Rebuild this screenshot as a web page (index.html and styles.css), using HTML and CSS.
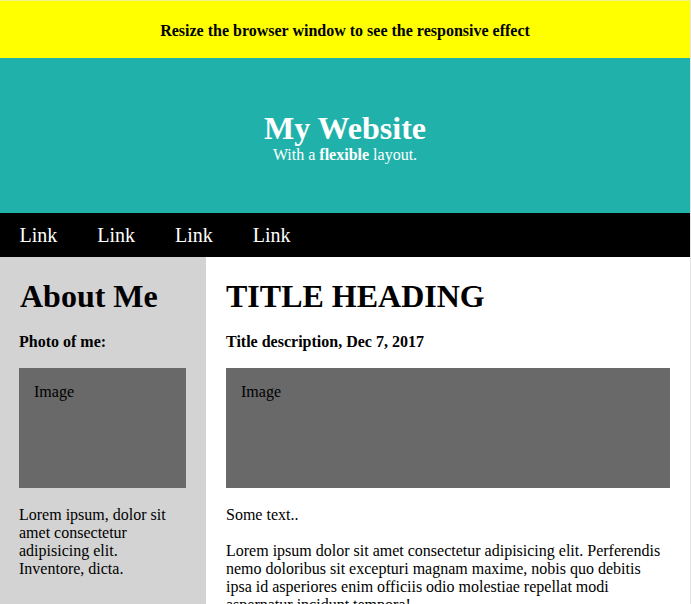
FILE: index.html
```html
<!DOCTYPE html>
<html lang="en">
<head>
<meta charset="utf-8">
<title>My Website</title>
<link rel="stylesheet" href="styles.css">
</head>
<body>
<div class="page">
  <div class="notice">
    <h4>Resize the browser window to see the responsive effect</h4>
  </div>
  <header class="header">
    <h1>My Website</h1>
    <p>With a <b>flexible</b> layout.</p>
  </header>
  <nav class="navbar">
    <a href="#">Link</a>
    <a href="#">Link</a>
    <a href="#">Link</a>
    <a href="#">Link</a>
  </nav>
  <div class="row">
    <aside class="side">
      <h2>About Me</h2>
      <h5>Photo of me:</h5>
      <div class="fakeimg">Image</div>
      <p>Lorem ipsum, dolor sit amet consectetur adipisicing elit. Inventore, dicta.</p>
    </aside>
    <main class="main">
      <h2>TITLE HEADING</h2>
      <h5>Title description, Dec 7, 2017</h5>
      <div class="fakeimg">Image</div>
      <p>Some text..<br><br>Lorem ipsum dolor sit amet consectetur adipisicing elit. Perferendis nemo doloribus sit excepturi magnam maxime, nobis quo debitis ipsa id asperiores enim officiis odio molestiae repellat modi aspernatur incidunt tempora!</p>
    </main>
  </div>
</div>
</body>
</html>
```
FILE: styles.css
```css
* {
  box-sizing: border-box;
}

html, body {
  margin: 0;
  padding: 0;
  background: #ffffff;
}

body {
  font-family: "Liberation Serif", "Times New Roman", serif;
  font-size: 16px;
  color: #000;
}

.page {
  width: 691px;
  border-top: 1px solid #f2f28c;
  border-right: 1px solid #e4e4e4;
}

.notice {
  background: #ffff00;
  padding: 21px 0 18px;
  text-align: center;
}

.notice h4 {
  margin: 0;
  font-size: 16px;
  font-weight: bold;
}

.header {
  background: #20b2aa;
  color: #ffffff;
  text-align: center;
  padding: 52px 0 49px;
}

.header h1 {
  margin: 0;
  font-size: 32px;
  line-height: 36px;
  font-weight: bold;
}

.header p {
  margin: 0;
  font-size: 16px;
}

.navbar {
  display: flex;
  background: #000;
}

.navbar a {
  display: block;
  color: #ffffff;
  text-decoration: none;
  font-size: 20px;
  line-height: 24px;
  padding: 10px 20.5px 10px 19.5px;
}

.row {
  display: flex;
}

.side {
  flex: 0 0 206px;
  background: #d3d3d3;
  padding: 21px 20px 20px 19px;
}

.main {
  flex: 1 1 auto;
  background: #ffffff;
  padding: 21px 20px 20px;
}

h2 {
  margin: 0 0 18px;
  font-size: 32px;
  font-weight: bold;
}

h5 {
  margin: 0 0 17px;
  font-size: 16px;
  font-weight: bold;
}

.side h2 {
  margin-left: 1px;
}

.fakeimg {
  background: #696969;
  height: 120px;
  padding: 15px;
}

.side p,
.main p {
  margin: 18px 0 16px;
  line-height: 18px;
}
```
